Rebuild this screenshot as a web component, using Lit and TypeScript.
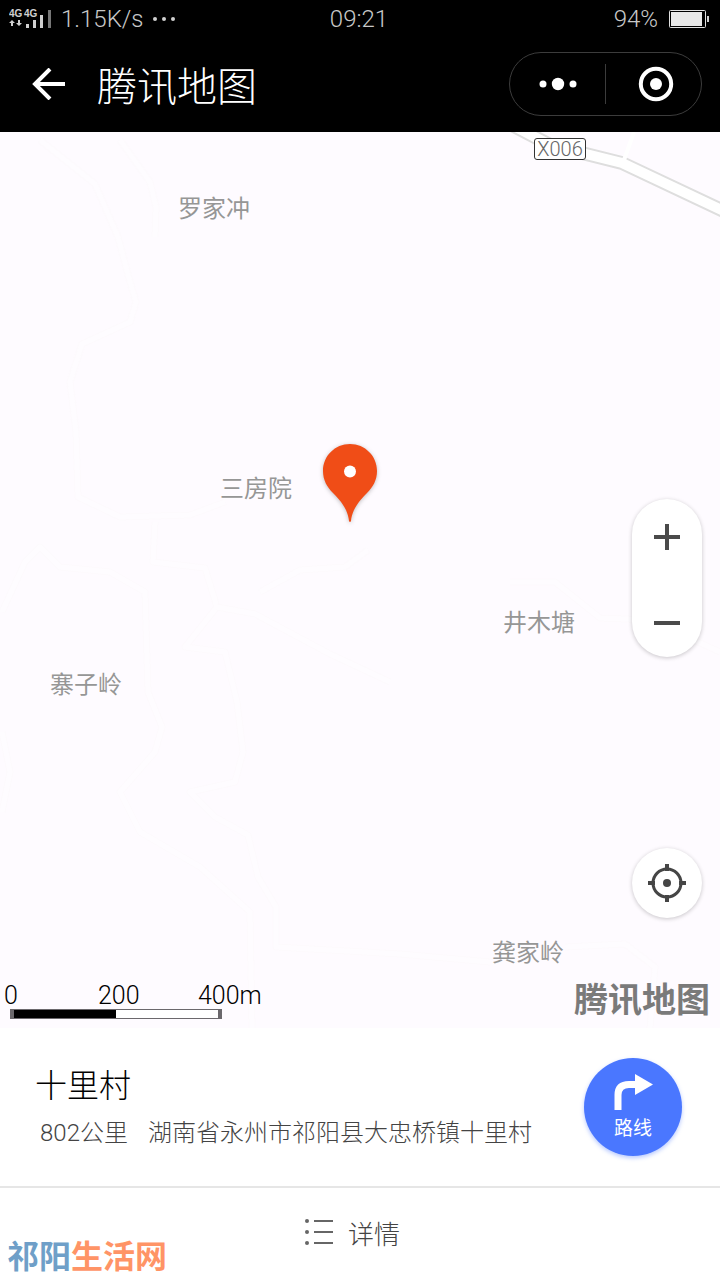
import { LitElement, html, svg, css } from "lit";
import { customElement } from "lit/decorators.js";

interface Place {
  name: string;
  x: number;
  y: number;
}

const MAP_WIDTH = 720;
const MAP_HEIGHT = 896;

// Centre points of the village names, in map units.
const PLACES: Place[] = [
  { name: "罗家冲", x: 214, y: 75 },
  { name: "三房院", x: 256, y: 355 },
  { name: "井木塘", x: 539, y: 489 },
  { name: "寨子岭", x: 86, y: 551 },
  { name: "龚家岭", x: 528, y: 819 },
];

const LANES: string[] = [
  "M40 8 L95 52 L118 105 L130 150 L136 170 L130 190 L82 212 L70 250 L76 300 L78 365 L120 385 L190 383 L225 370",
  "M120 8 L150 50 L156 75 L155 105",
  "M2 480 L25 430 L40 415 L60 435 L110 440 L145 460 L148 560 L162 595 L155 620 L120 660 L140 700 L200 735 L250 780 L252 896",
  "M155 390 L153 430 L205 436 L217 475 L185 515 L225 520 L237 570 L243 620 L235 650 L190 660 L215 685 L248 703 L258 745 L276 775 L276 815 L400 822 L490 830",
  "M217 475 L255 482 L330 522 L390 550",
  "M260 460 L300 438 L345 435 L368 418",
  "M510 450 L555 450 L600 486 L650 488 L720 520",
  "M565 815 L625 812 L655 835 L650 896",
  "M2 600 L10 640 L2 680",
];

const percent = (value: number, total: number) => `${(value / total) * 100}%`;

@customElement("status-bar")
class StatusBar extends LitElement {
  static styles = css`
    :host {
      display: grid;
      grid-template-columns: 1fr auto 1fr;
      align-items: center;
      height: 38px;
      padding: 0 11px 0 9px;
      background: #000;
      color: #c8c8c8;
      font-family: Roboto, "Noto Sans CJK SC", sans-serif;
      font-size: 24px;
      font-weight: 300;
      line-height: 38px;
    }
    .side {
      display: flex;
      align-items: center;
      gap: 9px;
    }
    .end {
      justify-content: flex-end;
      gap: 11px;
    }
    svg {
      display: block;
    }
    .networks {
      font: 700 10px "Liberation Sans", sans-serif;
    }
  `;

  render() {
    return html`
      <div class="side">
        <svg width="43" height="22" viewBox="0 0 43 22" fill="#d0d0d0">
          <text class="networks" x="0" y="9">4G</text>
          <text class="networks" x="15" y="9">4G</text>
          <path d="M3 12 L6 15 H4 V18 H2 V15 H0Z M10 18 L7 15 H9 V12 H11 V15 H13Z" />
          <path d="M17 16h3v4h-3z M24 12h3v8h-3z M31 7h3v13h-3z" />
          <path d="M39 2h3v18h-3z" fill="#777" />
        </svg>
        <span>1.15K/s</span>
        <svg width="24" height="6" viewBox="0 0 24 6" fill="#d0d0d0">
          <circle cx="2" cy="3" r="2" />
          <circle cx="11" cy="3" r="2" />
          <circle cx="20" cy="3" r="2" />
        </svg>
      </div>
      <span>09:21</span>
      <div class="side end">
        <span>94%</span>
        <svg width="40" height="18" viewBox="0 0 40 18">
          <rect x="0.5" y="0.5" width="36" height="17" rx="1" fill="none" stroke="#e0e0e0" />
          <rect x="2" y="2" width="31" height="14" fill="#e8e8e8" />
          <rect x="38" y="6" width="2" height="6" fill="#d0d0d0" />
        </svg>
      </div>
    `;
  }
}

@customElement("title-bar")
class TitleBar extends LitElement {
  static styles = css`
    :host {
      display: flex;
      align-items: center;
      box-sizing: border-box;
      height: 94px;
      padding: 0 18px 2px 32px;
      background: #000;
      color: #fff;
      font-family: "Noto Sans CJK SC", sans-serif;
    }
    button {
      display: grid;
      place-items: center;
      margin: 0;
      padding: 0;
      border: 0;
      background: none;
      color: inherit;
    }
    svg {
      display: block;
    }
    h1 {
      flex: 1;
      margin: 0 0 0 31px;
      font-size: 40px;
      font-weight: 300;
      line-height: 60px;
    }
    .capsule {
      display: grid;
      grid-template-columns: 95px 1px 1fr;
      align-items: center;
      box-sizing: border-box;
      width: 193px;
      height: 64px;
      border: 1px solid #3c3c3c;
      border-radius: 32px;
    }
    .divider {
      height: 40px;
      background: #3c3c3c;
    }
    .close {
      padding-left: 4px;
    }
  `;

  render() {
    return html`
      <button aria-label="返回">
        <svg width="34" height="32" viewBox="0 0 34 32" fill="none" stroke="#fff" stroke-width="4">
          <path d="M18 1 L3 16 L18 31 M2 16 H33" />
        </svg>
      </button>
      <h1>腾讯地图</h1>
      <div class="capsule">
        <button aria-label="更多">
          <svg width="38" height="14" viewBox="0 0 38 14" fill="#fff">
            <circle cx="4" cy="7" r="3.5" />
            <circle cx="19" cy="7" r="6.2" />
            <circle cx="34" cy="7" r="3.5" />
          </svg>
        </button>
        <span class="divider"></span>
        <button class="close" aria-label="关闭">
          <svg width="36" height="36" viewBox="0 0 36 36">
            <circle cx="18" cy="18" r="15.2" fill="none" stroke="#fff" stroke-width="4" />
            <circle cx="18" cy="18" r="6" fill="#fff" />
          </svg>
        </button>
      </div>
    `;
  }
}

@customElement("map-view")
class MapView extends LitElement {
  static styles = css`
    :host {
      display: block;
      position: relative;
      overflow: hidden;
      background: #fefbff;
      font-family: "Noto Sans CJK SC", sans-serif;
    }
    svg {
      display: block;
    }
    .roads {
      position: absolute;
      inset: 0;
      width: 100%;
      height: 100%;
    }
    .place,
    .shield {
      position: absolute;
      transform: translate(-50%, -50%);
      white-space: nowrap;
    }
    .place {
      color: #969696;
      font-size: 24px;
      line-height: 32px;
      text-shadow: 0 0 2px #fff;
    }
    .shield {
      box-sizing: border-box;
      width: 52px;
      border: 1px solid #333;
      border-radius: 3px;
      background: #fff;
      color: #666;
      font-family: Roboto, sans-serif;
      font-size: 20px;
      font-weight: 300;
      line-height: 20px;
      text-align: center;
    }
    .pin {
      position: absolute;
      transform: translate(-50%, -100%);
      filter: drop-shadow(0 1px 2px rgba(0, 0, 0, 0.25));
    }
    .controls {
      position: absolute;
      right: 18px;
      bottom: 110px;
      display: grid;
      gap: 191px;
    }
    .zoom,
    .locate {
      width: 70px;
      border-radius: 35px;
      background: #fff;
      box-shadow: 0 1px 4px rgba(0, 0, 0, 0.22);
    }
    .zoom {
      display: grid;
      grid-template-rows: 1fr 1fr;
      height: 158px;
    }
    .locate {
      height: 70px;
    }
    button {
      display: grid;
      place-items: center;
      margin: 0;
      padding: 0;
      border: 0;
      background: none;
    }
    .zoom button {
      align-content: end;
      padding-bottom: 20px;
    }
    .zoom button:first-child {
      align-content: start;
      padding: 25px 0 0;
    }
    .scale {
      position: absolute;
      left: 4px;
      bottom: 9px;
      width: 260px;
      color: #000;
      font-family: Roboto, sans-serif;
      font-size: 25px;
      font-weight: 300;
      line-height: 26px;
    }
    .ticks {
      display: grid;
      grid-template-columns: 94px 100px auto;
    }
    .bar {
      box-sizing: border-box;
      display: grid;
      grid-template-columns: 1fr 1fr;
      width: 212px;
      height: 10px;
      margin-left: 6px;
      border: solid #6b686c;
      border-width: 1px 4px;
      background: #fff;
    }
    .near {
      background: #000;
    }
    .brand {
      position: absolute;
      right: 10px;
      bottom: 10px;
      color: #7a7a7a;
      font-size: 34px;
      font-weight: 700;
      line-height: 40px;
    }
  `;

  render() {
    return html`
      <svg class="roads" viewBox="0 0 720 896" preserveAspectRatio="none" fill="none">
        ${LANES.map(
          (d) => svg`
            <path d=${d} stroke="#fdfafd" stroke-width="7" stroke-linejoin="round" />
            <path d=${d} stroke="#fefcff" stroke-width="5" stroke-linejoin="round" />`
        )}
        <path d="M510 -8 L550 13 L622 31 L730 82" stroke="#dedede" stroke-width="14" />
        <path d="M510 -8 L550 13 L622 31 L730 82" stroke="#fff" stroke-width="10" />
        <path d="M624 28 L634 0" stroke="#fff" stroke-width="4" />
      </svg>
      ${PLACES.map(
        (place) => html`
          <span
            class="place"
            style="left:${percent(place.x, MAP_WIDTH)};top:${percent(place.y, MAP_HEIGHT)}"
            >${place.name}</span
          >
        `
      )}
      <span
        class="shield"
        style="left:${percent(560, MAP_WIDTH)};top:${percent(17, MAP_HEIGHT)}"
        >X006</span
      >
      <svg
        class="pin"
        style="left:${percent(350, MAP_WIDTH)};top:${percent(390, MAP_HEIGHT)}"
        width="54"
        height="78"
        viewBox="0 0 54 78"
      >
        <path
          d="M27 0 C42 0 54 12 54 27 C54 36 50 43 44 49 C34 59 29 67 28 77 Q27 79 26 77 C25 67 20 59 10 49 C4 43 0 36 0 27 C0 12 12 0 27 0Z"
          fill="#f04d17"
        />
        <circle cx="27" cy="27.500" r="6" fill="#fff" />
      </svg>
      <div class="controls">
        <div class="zoom">
          <button aria-label="放大">
            <svg width="26" height="26" viewBox="0 0 26 26" stroke="#4a4a4a" stroke-width="4">
              <path d="M0 13 H26 M13 0 V26" />
            </svg>
          </button>
          <button aria-label="缩小">
            <svg width="26" height="26" viewBox="0 0 26 26" stroke="#4a4a4a" stroke-width="4">
              <path d="M0 12 H26" />
            </svg>
          </button>
        </div>
        <button class="locate" aria-label="定位">
          <svg width="38" height="38" viewBox="0 0 38 38" fill="none" stroke="#454545">
            <circle cx="19" cy="19" r="14" stroke-width="3" />
            <path d="M19 0 V7 M19 31 V38 M0 19 H7 M31 19 H38" stroke-width="4" />
            <circle cx="19" cy="19" r="4" fill="#454545" stroke="none" />
          </svg>
        </button>
      </div>
      <div class="scale">
        <div class="ticks"><span>0</span><span>200</span><span>400m</span></div>
        <div class="bar"><span class="near"></span></div>
      </div>
      <span class="brand">腾讯地图</span>
    `;
  }
}

@customElement("place-sheet")
class PlaceSheet extends LitElement {
  static styles = css`
    :host {
      display: block;
      background: #fff;
      font-family: "Noto Sans CJK SC", sans-serif;
    }
    svg {
      display: block;
    }
    .summary {
      display: flex;
      align-items: flex-start;
      justify-content: space-between;
      padding: 30px 38px 28px 35px;
      border-bottom: 2px solid #e6e6e6;
    }
    h2 {
      margin: 0;
      color: #000;
      font-size: 32px;
      font-weight: 300;
      line-height: 50px;
    }
    .address {
      display: flex;
      gap: 20px;
      margin: 0;
      padding-left: 5px;
      color: #444;
      font-family: Roboto, "Noto Sans CJK SC", sans-serif;
      font-size: 24px;
      font-weight: 300;
      line-height: 50px;
    }
    .route {
      display: flex;
      flex-direction: column;
      align-items: center;
      flex: none;
      gap: 4px;
      box-sizing: border-box;
      width: 98px;
      height: 98px;
      padding: 16px 0 0;
      border: 0;
      border-radius: 50%;
      background: #4a77ff;
      box-shadow: 0 2px 4px rgba(74, 119, 255, 0.4);
      color: #fff;
      font-family: inherit;
      font-size: 19px;
      line-height: 26px;
    }
    .details {
      display: flex;
      align-items: center;
      justify-content: center;
      gap: 14px;
      width: 100%;
      height: 92px;
      margin: 0;
      padding: 0 16px 4px 0;
      border: 0;
      background: none;
      color: #444;
      font-family: inherit;
      font-size: 26px;
      font-weight: 300;
    }
  `;

  render() {
    return html`
      <section class="summary">
        <div>
          <h2>十里村</h2>
          <p class="address"><span>802公里</span><span>湖南省永州市祁阳县大忠桥镇十里村</span></p>
        </div>
        <button class="route">
          <svg width="40" height="36" viewBox="0 0 40 36">
            <path d="M5 36 V21 Q5 10.500 16 10.500 H24" fill="none" stroke="#fff" stroke-width="7" />
            <path d="M22 0 L40 10.500 L22 21Z" fill="#fff" />
          </svg>
          <span>路线</span>
        </button>
      </section>
      <button class="details">
        <svg width="30" height="26" viewBox="0 0 30 26" fill="#666">
          <circle cx="3" cy="2" r="2" />
          <circle cx="3" cy="13" r="2" />
          <circle cx="3" cy="24" r="2" />
          <path d="M10 1h19v2H10z M10 12h19v2H10z M10 23h19v2H10z" />
        </svg>
        <span>详情</span>
      </button>
    `;
  }
}

@customElement("app-root")
class AppRoot extends LitElement {
  static styles = css`
    :host {
      display: flex;
      flex-direction: column;
      position: relative;
      min-height: 100vh;
      background: #fff;
    }
    map-view {
      flex: 1;
      min-height: 560px;
    }
    .watermark {
      position: absolute;
      left: 7px;
      bottom: 6px;
      color: #ff9466;
      font-family: "Noto Sans CJK SC", sans-serif;
      font-size: 32px;
      font-weight: 700;
      line-height: 40px;
    }
    .town {
      color: #6f9fc8;
    }
  `;

  render() {
    return html`
      <status-bar></status-bar>
      <title-bar></title-bar>
      <map-view></map-view>
      <place-sheet></place-sheet>
      <div class="watermark"><span class="town">祁阳</span>生活网</div>
    `;
  }
}
